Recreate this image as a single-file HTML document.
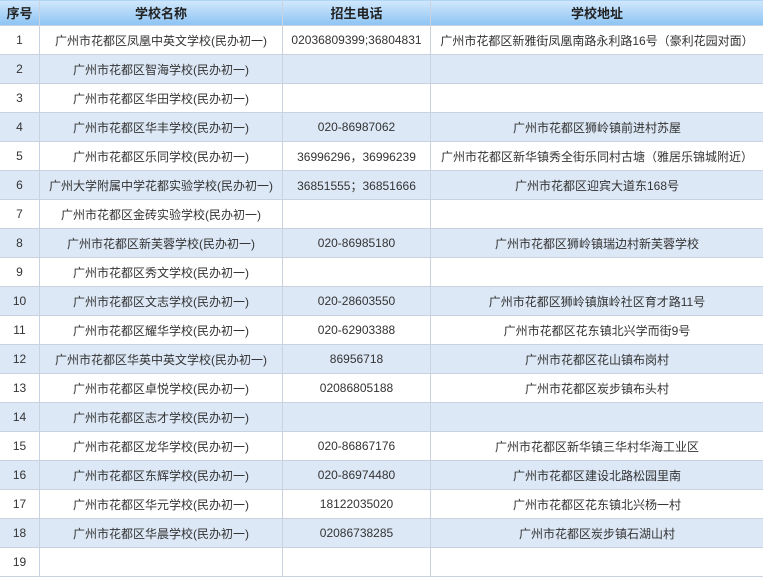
<!DOCTYPE html>
<html><head><meta charset="utf-8"><style>
body{margin:0;width:763px;height:552px;overflow:hidden;background:#fff;}
table{border-collapse:collapse;table-layout:fixed;width:764px;font-family:"Liberation Sans","Noto Sans CJK SC",sans-serif;font-size:12px;color:#333;}
td,th{border:1px solid #c9d3df;text-align:center;padding:0;white-space:nowrap;overflow:hidden;}
th{height:25px;background:linear-gradient(#d2e8fc,#8cc3f3);font-weight:bold;font-size:13px;color:#222;}
td{height:28px;}
tr:nth-child(odd) td{background:#dce8f6;}
table{margin-left:-1px;margin-top:-1px;}
</style></head><body>
<table>
<colgroup><col style="width:40px"><col style="width:243px"><col style="width:148px"><col style="width:333px"></colgroup>
<tr><th>序号</th><th>学校名称</th><th>招生电话</th><th>学校地址</th></tr>
<tr><td>1</td><td>广州市花都区凤凰中英文学校(民办初一)</td><td>02036809399;36804831</td><td>广州市花都区新雅街凤凰南路永利路16号（豪利花园对面）</td></tr>
<tr><td>2</td><td>广州市花都区智海学校(民办初一)</td><td></td><td></td></tr>
<tr><td>3</td><td>广州市花都区华田学校(民办初一)</td><td></td><td></td></tr>
<tr><td>4</td><td>广州市花都区华丰学校(民办初一)</td><td>020-86987062</td><td>广州市花都区狮岭镇前进村苏屋</td></tr>
<tr><td>5</td><td>广州市花都区乐同学校(民办初一)</td><td>36996296，36996239</td><td>广州市花都区新华镇秀全街乐同村古塘（雅居乐锦城附近）</td></tr>
<tr><td>6</td><td>广州大学附属中学花都实验学校(民办初一)</td><td>36851555；36851666</td><td>广州市花都区迎宾大道东168号</td></tr>
<tr><td>7</td><td>广州市花都区金砖实验学校(民办初一)</td><td></td><td></td></tr>
<tr><td>8</td><td>广州市花都区新芙蓉学校(民办初一)</td><td>020-86985180</td><td>广州市花都区狮岭镇瑞边村新芙蓉学校</td></tr>
<tr><td>9</td><td>广州市花都区秀文学校(民办初一)</td><td></td><td></td></tr>
<tr><td>10</td><td>广州市花都区文志学校(民办初一)</td><td>020-28603550</td><td>广州市花都区狮岭镇旗岭社区育才路11号</td></tr>
<tr><td>11</td><td>广州市花都区耀华学校(民办初一)</td><td>020-62903388</td><td>广州市花都区花东镇北兴学而街9号</td></tr>
<tr><td>12</td><td>广州市花都区华英中英文学校(民办初一)</td><td>86956718</td><td>广州市花都区花山镇布岗村</td></tr>
<tr><td>13</td><td>广州市花都区卓悦学校(民办初一)</td><td>02086805188</td><td>广州市花都区炭步镇布头村</td></tr>
<tr><td>14</td><td>广州市花都区志才学校(民办初一)</td><td></td><td></td></tr>
<tr><td>15</td><td>广州市花都区龙华学校(民办初一)</td><td>020-86867176</td><td>广州市花都区新华镇三华村华海工业区</td></tr>
<tr><td>16</td><td>广州市花都区东辉学校(民办初一)</td><td>020-86974480</td><td>广州市花都区建设北路松园里南</td></tr>
<tr><td>17</td><td>广州市花都区华元学校(民办初一)</td><td>18122035020</td><td>广州市花都区花东镇北兴杨一村</td></tr>
<tr><td>18</td><td>广州市花都区华晨学校(民办初一)</td><td>02086738285</td><td>广州市花都区炭步镇石湖山村</td></tr>
<tr><td>19</td><td></td><td></td><td></td></tr>
</table>
</body></html>
